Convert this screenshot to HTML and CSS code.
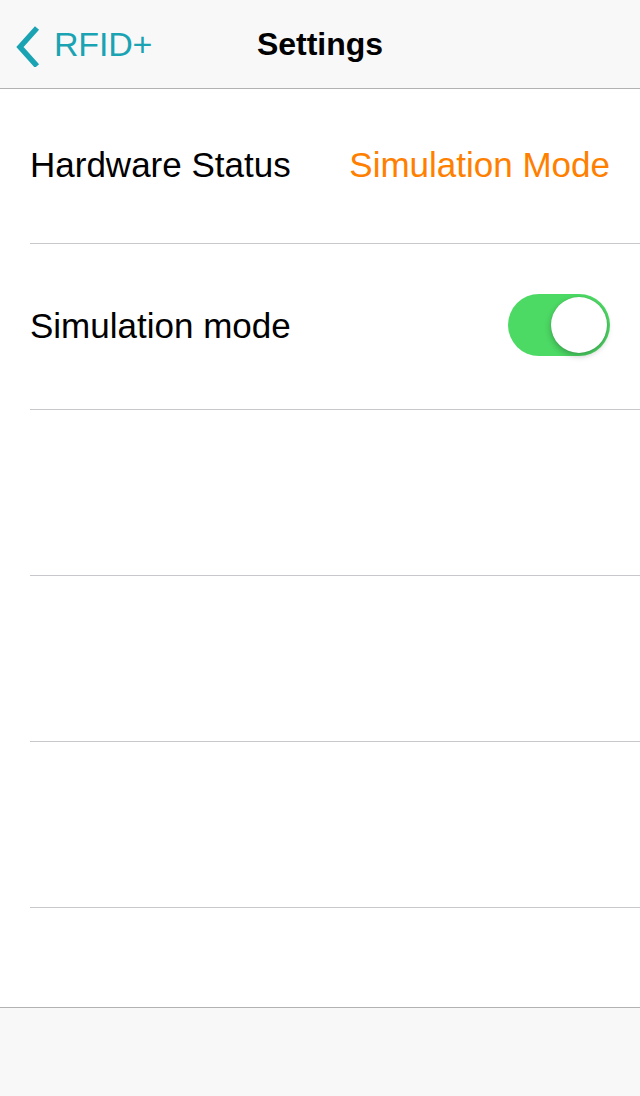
FILE: index.html
```html
<!DOCTYPE html>
<html>
<head>
<meta charset="utf-8">
<link rel="stylesheet" href="styles.css">
</head>
<body>
<div class="screen">
  <header class="navbar">
    <div class="back">
      <svg class="chevron" width="30" height="44" viewBox="0 0 30 44">
        <polyline points="21,5 4,24 21,43" fill="none" stroke="#1aa3b3" stroke-width="5.5" stroke-linecap="butt" stroke-linejoin="miter"/>
      </svg>
      <span class="back-label">RFID+</span>
    </div>
    <div class="title">Settings</div>
  </header>
  <main class="list">
    <div class="row row-first">
      <span class="label">Hardware Status</span>
      <span class="value">Simulation Mode</span>
    </div>
    <div class="row">
      <span class="label">Simulation mode</span>
      <div class="switch"><div class="knob"></div></div>
    </div>
    <div class="row"></div>
    <div class="row"></div>
    <div class="row"></div>
  </main>
  <footer class="toolbar"></footer>
</div>
</body>
</html>
```

FILE: styles.css
```css
html, body {
  margin: 0;
  padding: 0;
  background: #ffffff;
}
.screen {
  width: 640px;
  height: 1096px;
  display: flex;
  flex-direction: column;
  font-family: "Liberation Sans", Arial, sans-serif;
  overflow: hidden;
}
.navbar {
  height: 88px;
  flex: none;
  background: #f8f8f8;
  border-bottom: 1px solid #b2b2b2;
  position: relative;
  display: flex;
  align-items: center;
}
.back {
  display: flex;
  align-items: center;
  padding-left: 16px;
  gap: 8px;
  color: #1aa3b3;
}
.chevron {
  display: block;
  margin-top: 1px;
}
.back-label {
  font-size: 34px;
  letter-spacing: -0.2px;
}
.title {
  position: absolute;
  left: 0;
  right: 0;
  top: 0;
  height: 88px;
  line-height: 88px;
  text-align: center;
  font-size: 32px;
  font-weight: bold;
  color: #000;
  pointer-events: none;
}
.list {
  flex: 1;
  display: flex;
  flex-direction: column;
}
.row {
  height: 165px;
  flex: none;
  margin-left: 30px;
  padding-right: 30px;
  border-bottom: 1px solid #c8c7cc;
  display: flex;
  align-items: center;
  justify-content: space-between;
  font-size: 35px;
}
.row-first {
  height: 154px;
}
.label {
  color: #000;
  margin-top: -2px;
}
.value {
  color: #ff8000;
  margin-top: -2px;
}
.switch {
  width: 102px;
  height: 62px;
  border-radius: 31px;
  background: #4cd964;
  position: relative;
  margin-top: -3px;
}
.knob {
  position: absolute;
  right: 3px;
  top: 3px;
  width: 56px;
  height: 56px;
  border-radius: 50%;
  background: #fff;
  box-shadow: 0 3px 6px rgba(0,0,0,0.25), 0 0 1px rgba(0,0,0,0.2);
}
.toolbar {
  height: 88px;
  flex: none;
  background: #f8f8f8;
  border-top: 1px solid #b2b2b2;
}
```
